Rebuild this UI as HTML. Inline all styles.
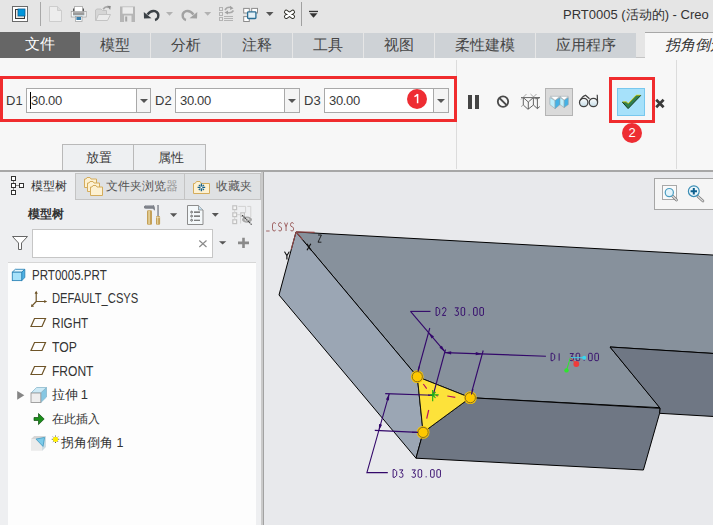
<!DOCTYPE html>
<html><head><meta charset="utf-8">
<style>
*{margin:0;padding:0;box-sizing:border-box}
html,body{width:713px;height:525px;overflow:hidden;background:#f7f7f7;font-family:"Liberation Sans",sans-serif;color:#333}
.a{position:absolute}
#qa{left:0;top:0;width:713px;height:32px;background:#e5e5e5}
#tabs{left:0;top:32px;width:713px;height:26px;background:#e5e5e5}
.tab{position:absolute;top:33px;height:25px;background:#ced2d6;font-size:15px;line-height:23px;font-weight:300;text-align:center;color:#464646;border-right:1px solid #e6e6e6}
#ribbon{left:0;top:58px;width:713px;height:112px;background:#f7f7f7}
.sep{position:absolute;width:1px;background:#dcdcdc}
.lbl{position:absolute;font-size:13px;color:#3a3a3a;line-height:16px}
.inp{position:absolute;top:88px;height:25px;background:#fff;border:1px solid #a9a9a9}
.dd{position:absolute;top:88px;height:25px;background:#f4f4f4;border:1px solid #a9a9a9}
.dd:after{content:"";position:absolute;left:3px;top:10px;border-left:4px solid transparent;border-right:4px solid transparent;border-top:4px solid #555}
.redc{position:absolute;width:20px;height:20px;border-radius:10px;background:#ee2d33;color:#fff;font-size:13px;line-height:20px;text-align:center}
.tree{position:absolute;font-size:13px;color:#333;line-height:16px;white-space:nowrap}
.lat{font-size:14px;transform-origin:0 0}
</style></head><body>
<!-- quick access -->
<div class="a" id="qa"></div>
<div class="a" id="tabs"></div>
<div class="a" id="ribbon"></div>
<svg class="a" style="left:0;top:0" width="330" height="32" viewBox="0 0 330 32">
 <!-- app icon -->
 <rect x="12.5" y="6.5" width="15" height="15" fill="#fff" stroke="#6a6a6a"/>
 <rect x="15.5" y="9.5" width="9" height="9" fill="#ece8e2" stroke="#3a3a3a"/>
 <rect x="18" y="9" width="7" height="7" fill="#0096dc" stroke="#0b5d92" stroke-width="0.8"/>
 <line x1="40.5" y1="2" x2="40.5" y2="26" stroke="#a8a8a8"/>
 <!-- new -->
 <path d="M49.5 6.5 H57.5 L61.5 10.5 V21.5 H49.5 Z" fill="#ededed" stroke="#cdcdcd"/>
 <path d="M57.5 6.5 V10.5 H61.5" fill="#dcdcdc" stroke="#cdcdcd"/>
 <!-- printer -->
 <rect x="74.5" y="6.5" width="8" height="6" fill="#fff" stroke="#b4b4b4"/>
 <rect x="73" y="8.5" width="1.2" height="4" fill="#555"/><rect x="82.8" y="8.5" width="1.2" height="4" fill="#555"/>
 <rect x="71.2" y="11.5" width="15" height="5.5" fill="#fbfbfb" stroke="#9c9c9c" stroke-width="0.7"/>
 <rect x="73" y="12.2" width="11.4" height="3.2" fill="#9a9a9a"/>
 <rect x="73" y="15.4" width="11.4" height="0.8" fill="#cde4ee"/>
 <rect x="75.5" y="16.5" width="6.5" height="5" fill="#fff" stroke="#a8a8a8" stroke-width="0.8"/>
 <rect x="76.4" y="17" width="4.6" height="3" fill="#3a80ac"/>
 <!-- open -->
 <path d="M95.5 20.5 V10 L97 9 H101 L102.5 10.5 H106.5 V20.5 Z" fill="#d6d6d6" stroke="#c2c2c2"/>
 <path d="M96 20.5 L98.5 14.5 H110.5 L107.5 20.5 Z" fill="#ebebeb" stroke="#c4c4c4"/>
 <path d="M103.2 9.2 Q105.5 5.8 108.6 7.6" fill="none" stroke="#a8a8a8" stroke-width="1.7"/>
 <path d="M107 5.8 L110.8 6 L110.2 10 Z" fill="#8a8a8a"/>
 <!-- save -->
 <rect x="120" y="6.5" width="15" height="15.5" fill="#b6b6b6"/>
 <rect x="122.5" y="7.2" width="10.5" height="6.5" fill="#ececec"/>
 <rect x="124" y="15.5" width="7.5" height="6.5" fill="#e4e4e4"/>
 <rect x="125.2" y="16.5" width="2" height="5" fill="#a6a6a6"/>
 <!-- undo -->
 <path d="M147.5 14.5 Q151 10 155 11.2 Q159.5 13 158 17.5 Q157 19.5 155 20" fill="none" stroke="#3b4146" stroke-width="2.4"/>
 <path d="M143.8 12 L151.5 18.3 L144 18.5 Z" fill="#3b4146"/>
 <path d="M166 12 H173 L169.5 15.8 Z" fill="#b2b2b2"/>
 <!-- redo -->
 <path d="M193.5 14.5 Q190 10 186 11.2 Q181.5 13 183 17.5 Q184 19.5 186 20" fill="none" stroke="#a2a2a2" stroke-width="2.4"/>
 <path d="M197.3 12 L189.5 18.3 L197 18.5 Z" fill="#a2a2a2"/>
 <path d="M204.2 12 H211.2 L207.7 15.8 Z" fill="#b2b2b2"/>
 <!-- regen -->
 <g fill="none" stroke="#b4b4b4" stroke-width="1">
  <rect x="219.5" y="7.5" width="3" height="3"/><rect x="219.5" y="12.5" width="3" height="3"/><rect x="219.5" y="17.5" width="3" height="3"/>
  <path d="M224 16.5 H233 M224 18.5 H233 M224 20.5 H233"/>
 </g>
 <path d="M225 10 Q227 6.5 231 7.5" fill="none" stroke="#a8a8a8" stroke-width="1.6"/>
 <path d="M233.5 10.5 Q231.5 13.5 227.5 12.5" fill="none" stroke="#a8a8a8" stroke-width="1.6"/>
 <path d="M230 5.8 L233.5 8.2 L230.2 10 Z M228 10.5 L224.5 12.5 L228 14.5 Z" fill="#a0a0a0"/>
 <!-- window -->
 <g fill="#fff" stroke="#8c8c8c" stroke-width="1">
  <rect x="243.7" y="8.4" width="5.6" height="4.6"/><rect x="251.7" y="8.4" width="5.8" height="4.6"/><rect x="243.7" y="16.6" width="5.6" height="4.9"/>
 </g>
 <rect x="247.6" y="11.8" width="8.3" height="6.7" rx="0.8" fill="#e4f0f6" stroke="#2a6e94" stroke-width="1.3"/>
 <path d="M266 12 H273.5 L269.75 16 Z" fill="#555"/>
 <!-- close -->
 <path d="M286.3 12 L292.7 16.6 M292.7 12 L286.3 16.6" fill="none" stroke="#2e2e26" stroke-width="4.6" stroke-linecap="round"/>
 <path d="M286.3 12 L292.7 16.6 M292.7 12 L286.3 16.6" fill="none" stroke="#fff" stroke-width="2.7" stroke-linecap="round"/>
 <line x1="301.5" y1="2" x2="301.5" y2="26" stroke="#a0a0a0"/>
 <rect x="309" y="10.8" width="9" height="1.3" fill="#333"/>
 <path d="M309.5 13.2 H317.5 L313.5 17.8 Z" fill="#333"/>
</svg>

<!-- tabs -->
<div class="tab" style="left:0;top:32px;height:26px;width:80px;background:#666;color:#fff;border-right:none">文件</div>
<div class="tab" style="left:80px;width:71px">模型</div>
<div class="tab" style="left:151px;width:71px">分析</div>
<div class="tab" style="left:222px;width:71px">注释</div>
<div class="tab" style="left:293px;width:71px">工具</div>
<div class="tab" style="left:364px;width:71px">视图</div>
<div class="tab" style="left:435px;width:101px">柔性建模</div>
<div class="tab" style="left:536px;width:100px;border-right:none">应用程序</div>
<div class="a" style="left:636px;top:57px;width:9px;height:1px;background:#c4c4c4"></div>
<div class="a" style="left:645px;top:32px;width:68px;height:27px;background:#f7f7f7;border-top:1px solid #a8a8a8"></div>
<div class="a" style="left:665px;top:35px;font-size:15px;font-style:italic;color:#333;white-space:nowrap;line-height:20px">拐角倒角</div>
<div class="a" style="left:563px;top:6px;font-size:13px;color:#333;white-space:nowrap;line-height:18px">PRT0005 (活动的) - Creo</div>

<!-- ribbon separators -->
<div class="sep" style="left:456px;top:60px;height:109px"></div>
<div class="sep" style="left:676px;top:60px;height:109px"></div>

<!-- dims -->
<div class="lbl" style="left:6px;top:93px">D1</div>
<div class="inp" style="left:26px;width:111px"></div>
<div class="dd" style="left:136px;width:15px"></div>
<div class="lbl" style="left:31px;top:93px;letter-spacing:-0.35px">30.00</div>
<div class="a" style="left:30px;top:92px;width:1px;height:17px;background:#000"></div>

<div class="lbl" style="left:155px;top:93px">D2</div>
<div class="inp" style="left:175px;width:110px"></div>
<div class="dd" style="left:284px;width:16px"></div>
<div class="lbl" style="left:180px;top:93px;letter-spacing:-0.35px">30.00</div>

<div class="lbl" style="left:304px;top:93px">D3</div>
<div class="inp" style="left:324px;width:110px"></div>
<div class="dd" style="left:433px;width:16px"></div>
<div class="lbl" style="left:329px;top:93px;letter-spacing:-0.35px">30.00</div>
<div class="redc" style="left:407px;top:89px"></div>
<svg class="a" style="left:407px;top:89px" width="20" height="20"><path d="M10.6 5 V14.2 M10.6 5.2 Q9.5 7 7.4 7.6" fill="none" stroke="#fff" stroke-width="1.5"/></svg>

<!-- red box 1 -->
<div class="a" style="left:0;top:76px;width:457px;height:46px;border:3px solid #f02c2e"></div>

<!-- right tools -->
<div class="a" style="left:468px;top:95px;width:4px;height:14px;background:#454545"></div>
<div class="a" style="left:475px;top:95px;width:4px;height:14px;background:#454545"></div>

<div class="a" style="left:545px;top:88px;width:28px;height:28px;background:#dadada;border:1px solid #b4b4b4"></div>
<div class="a" style="left:617px;top:88px;width:28px;height:28px;background:#a6e1fa;border:1px solid #78c8ee"></div>
<div class="a" style="left:609px;top:77px;width:46px;height:46px;border:3px solid #f02c2e"></div>
<div class="redc" style="left:622px;top:123px">2</div>

<svg class="a" style="left:460px;top:84px" width="220" height="36" viewBox="460 84 220 36">
 <circle cx="503" cy="101.6" r="5.2" fill="none" stroke="#4a4a4a" stroke-width="1.8"/>
 <line x1="499.4" y1="98" x2="506.6" y2="105.2" stroke="#4a4a4a" stroke-width="1.8"/>
 <g fill="none" stroke="#555" stroke-width="0.9">
  <path d="M521 97.6 H539.8 M523.3 97.6 V105 M528.3 102 V109 M533.4 97.6 V105 M537.4 98.6 V108.6"/>
  <path d="M523.3 97.6 L528.3 102 L533.4 97.6 M523.3 105 L528 109.3 L533.4 105 L537.4 108.6 L539.8 106.5 M533.4 97.6 L537.4 98.6 L539.8 97.6"/>
  <path d="M521 99.5 L526.5 94 M530.5 94 L536.5 99.8 M536.5 94 L531 99.5 M521 106.7 L523.3 105" stroke="#888" stroke-width="0.7"/>
 </g>
 <!-- shaded -->
 <g stroke="#8a9aa2" stroke-width="0.5">
 <path d="M550.5 96.3 H559.6 L555.1 100.6 Z" fill="#fff"/>
 <path d="M549.9 97.6 L555.1 100.6 V108.7 L549.9 104.6 Z" fill="#bdeefc"/>
 <path d="M555.1 100.6 L560 97.6 V104.6 L555.1 108.7 Z" fill="#44b2e6"/>
 <path d="M560 96.3 H568.2 L564.2 100.3 Z" fill="#fff"/>
 <path d="M560 97.6 L564.2 100.3 V107.6 L560 104.6 Z" fill="#bdeefc"/>
 <path d="M564.2 100.3 L568.3 97.6 V104.6 L564.2 107.6 Z" fill="#44b2e6"/>
 </g>
 <!-- glasses -->
 <defs><linearGradient id="lg" x1="0" y1="0" x2="0" y2="1"><stop offset="0" stop-color="#ffffff"/><stop offset="1" stop-color="#c4dbe6"/></linearGradient></defs>
 <circle cx="583.7" cy="102.5" r="4.2" fill="url(#lg)" stroke="#404040" stroke-width="1.25"/>
 <circle cx="593.4" cy="102.5" r="4.2" fill="url(#lg)" stroke="#404040" stroke-width="1.25"/>
 <path d="M580.2 100.5 Q582 96.5 585.5 95.2 L589.5 98.8" fill="none" stroke="#404040" stroke-width="1.2"/>
 <path d="M597.2 94.8 L597.6 102" fill="none" stroke="#404040" stroke-width="1.2"/>
 <!-- check -->
 <path d="M622.4 102.2 H626.5 L628.1 104 L636.4 95.5 H640.7 L628.1 108.6 Z" fill="#2f8050" stroke="#123a1c" stroke-width="1"/>
 <path d="M622.8 101.9 H626.3 L628.1 103.7 L636.3 95.2 H640.3" fill="none" stroke="#dfe81a" stroke-width="0.9"/>
 <!-- x -->
 <path d="M656.2 99.8 L663.6 107.2 M663.6 99.8 L656.2 107.2" stroke="#3a3a3a" stroke-width="2.7"/>
</svg>
<!-- placement tabs -->
<div class="a" style="left:62px;top:144px;width:72px;height:27px;background:#eef0f2;border:1px solid #b9b9b9;border-bottom:none"></div>
<div class="a" style="left:134px;top:144px;width:72px;height:27px;background:#eef0f2;border:1px solid #b9b9b9;border-bottom:none;border-left:none"></div>
<div class="lbl" style="left:86px;top:150px;font-size:13px">放置</div>
<div class="lbl" style="left:158px;top:150px;font-size:13px">属性</div>

<!-- line below ribbon -->
<div class="a" style="left:0;top:170px;width:713px;height:2px;background:#a7a7a7"></div>

<!-- left panel -->
<div class="a" style="left:0;top:172px;width:261px;height:353px;background:#eeeff1"></div>
<div class="a" style="left:261px;top:172px;width:2px;height:353px;background:#cacaca"></div>
<div class="a" style="left:263px;top:172px;width:1px;height:353px;background:#a2a2a2"></div>
<!-- panel tabs -->
<div class="a" style="left:75px;top:173px;width:110px;height:27px;background:#dfe1e3;border:1px solid #c4c4c4"></div>
<div class="a" style="left:185px;top:173px;width:76px;height:27px;background:#dfe1e3;border:1px solid #c4c4c4;border-left:none"></div>
<div class="tree" style="left:31px;top:178px;font-size:12px">模型树</div>
<div class="tree" style="left:106px;top:178px;font-size:12px;width:71px;overflow:hidden;color:#555">文件夹浏览<span style="opacity:0.55">器</span></div>
<div class="tree" style="left:216px;top:178px;font-size:12px;color:#555">收藏夹</div>
<div class="tree" style="left:28px;top:206px;font-size:12px;font-weight:bold">模型树</div>

<!-- search -->
<div class="a" style="left:32px;top:229px;width:181px;height:29px;background:#fff;border:1px solid #c6c6c6"></div>

<!-- tree white area -->
<div class="a" style="left:8px;top:262px;width:248px;height:263px;background:#fdfdfd;border-top:1px solid #d6d6d6"></div>
<div class="tree lat" style="left:32px;top:267px;transform:scaleX(0.825)">PRT0005.PRT</div>
<div class="tree lat" style="left:52px;top:290px;transform:scaleX(0.80)">DEFAULT_CSYS</div>
<div class="tree lat" style="left:52px;top:315px;transform:scaleX(0.83)">RIGHT</div>
<div class="tree lat" style="left:52px;top:339px;transform:scaleX(0.87)">TOP</div>
<div class="tree lat" style="left:52px;top:363px;transform:scaleX(0.86)">FRONT</div>
<div class="tree" style="left:52px;top:387px;letter-spacing:-0.3px">拉伸 1</div>
<div class="tree" style="left:52px;top:411px;font-size:12px">在此插入</div>
<div class="tree" style="left:61px;top:435px;font-size:12.5px">拐角倒角 1</div>
<svg class="a" style="left:0;top:172px" width="262" height="290" viewBox="0 172 262 290">
 <!-- model tree tab icon -->
 <g fill="#fff" stroke="#333" stroke-width="1">
  <rect x="11.5" y="176.5" width="4" height="4"/><rect x="11.5" y="183.5" width="4" height="4"/><rect x="11.5" y="190.5" width="4" height="4"/><rect x="19.5" y="183.5" width="4" height="4"/>
 </g>
 <path d="M13.5 181 V183 M13.5 188 V190 M16 185.5 H19" stroke="#888" stroke-width="1"/>
 <!-- folders -->
 <g fill="#fdf1d2" stroke="#d4ac5c" stroke-width="1">
  <path d="M84.5 187.5 V179 H86 L87 177.5 H90 L91 179 H96.5 V187.5 Z"/>
  <path d="M87.5 191.5 V183 H89 L90 181.5 H93 L94 183 H99.5 V191.5 Z"/>
  <path d="M90.5 195.5 V187 H92 L93 185.5 H96 L97 187 H102.5 V195.5 Z"/>
 </g>
 <path d="M193.5 193.5 V183.5 H195 L196.5 181.5 H200 L201.5 183.5 H209.5 V193.5 Z" fill="#fdf1d2" stroke="#d4ac5c" stroke-width="1"/>
 <g stroke="#13608c" stroke-width="1.4">
  <path d="M201.4 183.6 V191.2 M197.6 187.4 H205.2"/>
  <path d="M198.8 184.8 L200.2 186.2 M204 184.8 L202.6 186.2 M198.8 190 L200.2 188.6 M204 190 L202.6 188.6" stroke-width="1.1"/>
 </g>
 <circle cx="201.4" cy="187.4" r="0.9" fill="#fff"/>
 <!-- hammer/screwdriver -->
 <path d="M144 206.2 Q145.5 204.8 149 205 H153.5 Q155.3 206.5 154.9 210.7 L152.8 208.8 H146 Q144.3 208.8 144 207.8 Z" fill="#7d8189"/>
 <path d="M146 205.6 H153" stroke="#b4b8be" stroke-width="1"/>
 <rect x="147" y="210.2" width="5" height="14.6" rx="1.2" fill="#c4a058"/>
 <rect x="148.3" y="210.8" width="1.6" height="13.4" fill="#e6d29c"/>
 <rect x="157.2" y="205" width="1.6" height="11" fill="#858991"/>
 <rect x="157.5" y="205.5" width="0.6" height="10" fill="#b0b4ba"/>
 <rect x="156" y="216" width="4.1" height="8.8" rx="1.1" fill="#c4a058"/>
 <rect x="157" y="216.5" width="1.2" height="7.8" fill="#e2cc94"/>
 <path d="M156.2 217.6 H160" stroke="#f3ead0" stroke-width="0.6"/>
 <path d="M170 213.2 H177.2 L173.6 217 Z" fill="#555"/>
 <!-- doc -->
 <path d="M187.5 205.5 H198.5 L203 210 V224.5 H187.5 Z" fill="#f4f8fa" stroke="#8c8c8c" stroke-width="1"/>
 <path d="M198.5 205.5 V210 H203" fill="#c5dfee" stroke="#8c8c8c" stroke-width="0.8"/>
 <g fill="none" stroke="#555" stroke-width="0.9"><circle cx="191.6" cy="212.1" r="0.9"/><circle cx="191.6" cy="216.1" r="0.9"/><circle cx="191.6" cy="220.2" r="0.9"/></g>
 <path d="M194 212.1 H200 M194 216.1 H200 M194 220.2 H200" stroke="#555" stroke-width="1.1"/>
 <path d="M211.8 213.1 H218.8 L215.3 216.7 Z" fill="#555"/>
 <!-- show icon -->
 <g fill="#f4f4f4" stroke="#c2c2c2" stroke-width="1.2">
  <rect x="232.8" y="205.8" width="3.8" height="3.8"/><rect x="232.8" y="212.8" width="3.8" height="3.8"/><rect x="232.8" y="219.8" width="3.8" height="3.8"/>
  <rect x="240.8" y="212.8" width="3.6" height="3.6"/>
 </g>
 <path d="M234.7 209.6 V212.8 M234.7 216.6 V219.8 M236.6 214.7 H240.8 M238.3 206.4 H245.6 V212.8 M240.6 217 V223.5 M247.3 206.4 H250.8 V217" fill="none" stroke="#d2d2d2" stroke-width="1"/>
 <ellipse cx="247" cy="219.6" rx="5" ry="3.1" fill="#a8a8a8"/>
 <ellipse cx="247" cy="219.6" rx="2.6" ry="1.8" fill="#d8d8d8"/>
 <path d="M242.1 215.1 L251.8 224.8" stroke="#3a3a3a" stroke-width="1.1" stroke-dasharray="1.4 0.6"/>
 <!-- filter -->
 <path d="M12.5 236.5 H27.5 L21.5 243 V249.5 H18.5 V243 Z" fill="#fff" stroke="#666" stroke-width="1"/>
 <!-- search x, arrow, plus -->
 <path d="M199.3 240.5 L206.5 247 M206.5 240.5 L199.3 247" stroke="#8a8a8a" stroke-width="1.2"/>
 <path d="M219 241.2 H226.3 L222.65 244.6 Z" fill="#555"/>
 <path d="M238 242.9 H249 M243.5 237.8 V248" stroke="#8a8a8a" stroke-width="2.6"/>
 <!-- prt cube -->
 <path d="M12.3 272.2 L15.3 269.3 H24.8 L21.7 272.2 Z" fill="#e4f6fd" stroke="#2f86b8" stroke-width="0.9"/>
 <path d="M21.7 272.2 L24.8 269.3 V277.6 L21.7 280.6 Z" fill="#4fb3e4" stroke="#2f86b8" stroke-width="0.9"/>
 <rect x="12.3" y="272.2" width="9.4" height="8.4" fill="#a6e2fa" stroke="#2f86b8" stroke-width="0.9"/>
 <!-- csys -->
 <g stroke="#6e5428" stroke-width="1.2" fill="none">
  <path d="M36.2 292 V301.5 H46 M36.2 301.5 L31.8 306.2"/>
 </g>
 <path d="M34.6 293.8 L36.2 290.8 L37.8 293.8 Z M44.2 299.9 L47.2 301.5 L44.2 303.1 Z M31 307 L31.6 303.9 L34.1 306.4 Z" fill="#6e5428"/>
 <!-- planes -->
 <g fill="none" stroke="#6e5428" stroke-width="1.2">
  <path d="M34.5 318.5 H45.5 L42 326.5 H31 Z"/>
  <path d="M34.5 342.5 H45.5 L42 350.5 H31 Z"/>
  <path d="M34.5 366.5 H45.5 L42 374.5 H31 Z"/>
 </g>
 <!-- expand triangle -->
 <path d="M17.2 390.9 L24.3 395.35 L17.2 399.8 Z" fill="#858585"/>
 <!-- extrude -->
 <path d="M31 393 L36.6 387.5 H46.5 L40.8 393 Z" fill="#cdeaf6" stroke="#8ab8cc" stroke-width="0.8"/>
 <path d="M40.8 393 L46.5 387.5 V397 L40.8 402.5 Z" fill="#86c7e3" stroke="#8ab8cc" stroke-width="0.8"/>
 <rect x="31" y="393" width="9.8" height="9.5" fill="#eeeeee" stroke="#9a9a9a" stroke-width="0.9"/>
 <!-- insert arrow -->
 <path d="M34 417.5 H38.5 V413.5 L44.2 419 L38.5 424.6 V420.5 H34 Z" fill="#1b8f1b" stroke="#0d4a0d" stroke-width="0.7"/>
 <!-- chamfer icon -->
 <path d="M34.2 436 H45.7 V447 L42.1 450.8 V439.1 H31 Z" fill="#d6d6d6"/>
 <path d="M42.1 439.1 L45.7 436 V447 L42.1 450.8 Z" fill="#c9dbe3"/>
 <rect x="31" y="439.1" width="11.1" height="11.7" fill="#ebebeb"/>
 <path d="M36 439.1 L44.6 437.4 L43 446.4 Z" fill="#7ccbea" stroke="#3d98c0" stroke-width="0.8"/>
 <!-- asterisk -->
 <circle cx="55.5" cy="439.3" r="2.6" fill="#ffee00"/>
 <g stroke="#333" stroke-width="0.9"><path d="M55.5 435.6 V436.5 M55.5 442.1 V443 M51.8 439.3 H52.7 M58.3 439.3 H59.2 M52.9 436.7 L53.5 437.3 M58.1 436.7 L57.5 437.3 M52.9 441.9 L53.5 441.3 M58.1 441.9 L57.5 441.3"/></g>
</svg>
<!-- viewport -->
<div class="a" style="left:264px;top:172px;width:449px;height:353px;background:#e8e9ec"></div>
<svg class="a" style="left:264px;top:172px" width="449" height="353" viewBox="264 172 449 353">
<polygon points="296,232 714,255.1 714,353.5 610,347 660,407.7 470.3,397.7 417.3,376.7" fill="#87919c" stroke="#000" stroke-width="1"/>
<polygon points="296,232 279,295 416,458.2 423.1,432.4 417.3,376.7" fill="#9ba6b4" stroke="#000" stroke-width="1"/>
<polygon points="423.1,432.4 470.3,397.7 660.2,408.3 659.6,413.3 643.4,470 416,458.2" fill="#6f7784" stroke="#000" stroke-width="1"/>
<polygon points="610,347 714,353.5 714,416.5 659.6,413.3 660.2,408.3" fill="#6f7784" stroke="#000" stroke-width="1"/>
<polygon points="417.3,376.7 470.3,397.7 423.1,432.4" fill="#fde23a" stroke="#111" stroke-width="1"/>
<path d="M423.3 384 L426.7 388.7 M447.3 396 L455.3 397.3 M428.7 410 L426.7 418.7 M436 395.5 L438 396" stroke="#b8145e" stroke-width="1.2" fill="none"/>
<g fill="none" stroke="#33086a" stroke-width="1.1">
<path d="M410.5 311.4 H430.5"/>
<path d="M410.5 311.4 L444.8 351.6"/>
<path d="M418 371 L429.8 328"/>
<path d="M445.5 349.5 L433.6 393.5"/>
<path d="M444.8 352.6 L545.9 356.2"/>
<path d="M471.6 392.5 L483.2 350.5"/>
<path d="M385.2 393.6 L432.7 395.3"/>
<path d="M374.8 430.4 L418 432.4"/>
<path d="M389.2 393.8 L366.9 472.6 H387.8"/>
</g>
<path d="M428.55 332.55 L433.99 336.46 L431.55 338.54 Z" fill="#33086a"/>
<path d="M444.90 351.72 L439.46 347.81 L441.90 345.73 Z" fill="#33086a"/>
<path d="M444.66 352.60 L451.22 351.23 L451.10 354.43 Z" fill="#33086a"/>
<path d="M482.25 353.93 L475.70 355.30 L475.81 352.10 Z" fill="#33086a"/>
<path d="M389.22 393.74 L388.99 400.43 L385.91 399.56 Z" fill="#33086a"/>
<path d="M378.79 430.58 L379.02 423.89 L382.10 424.77 Z" fill="#33086a"/>
<circle cx="417.3" cy="376.7" r="6.4" fill="#fbc600"/><circle cx="417.3" cy="376.7" r="5.1" fill="#ffc800" stroke="#756228" stroke-width="0.9"/>
<circle cx="470.3" cy="397.7" r="6.4" fill="#fbc600"/><circle cx="470.3" cy="397.7" r="5.1" fill="#ffc800" stroke="#756228" stroke-width="0.9"/>
<circle cx="423.1" cy="432.4" r="6.4" fill="#fbc600"/><circle cx="423.1" cy="432.4" r="5.1" fill="#ffc800" stroke="#756228" stroke-width="0.9"/>
<path d="M418 371.5 L419.5 366 M471.4 394.5 L473 389 M418 432.4 L412 432.2 M432.7 395.3 L428 395.1" stroke="#33086a" stroke-width="1.1" fill="none"/>
<path d="M432.7 390 V401.3 M430 394.9 H438.7 M432.7 394.9 L435.5 392 M432.7 394.9 L435.5 398" stroke="#18b018" stroke-width="1.1" fill="none"/>
<g fill="none" stroke="#33086a" stroke-width="1.0" vector-effect="non-scaling-stroke"><path transform="translate(436.10 307.5) scale(0.9 0.99)" d="M0 0 V8 M0 0 H2 L4 2 V6 L2 8 H0"/><path transform="translate(442.35 307.5) scale(0.9 0.99)" d="M0 1.8 Q0.2 0 2 0 Q4 0 4 2 Q4 3.4 2.6 4.6 L0 8 H4"/><path transform="translate(454.85 307.5) scale(0.9 0.99)" d="M0 0.3 H4 L1.6 3.6 H2.4 Q4 3.6 4 5.4 V6.5 Q4 8 2.6 8 H1.2 Q0.2 8 0 7"/><path transform="translate(461.10 307.5) scale(0.9 0.99)" d="M1.2 0 H2.8 Q4 0 4 1.5 V6.5 Q4 8 2.8 8 H1.2 Q0 8 0 6.5 V1.5 Q0 0 1.2 0 Z"/><path transform="translate(467.35 307.5) scale(0.9 0.99)" d="M2 6.9 V8.1"/><path transform="translate(473.60 307.5) scale(0.9 0.99)" d="M1.2 0 H2.8 Q4 0 4 1.5 V6.5 Q4 8 2.8 8 H1.2 Q0 8 0 6.5 V1.5 Q0 0 1.2 0 Z"/><path transform="translate(479.85 307.5) scale(0.9 0.99)" d="M1.2 0 H2.8 Q4 0 4 1.5 V6.5 Q4 8 2.8 8 H1.2 Q0 8 0 6.5 V1.5 Q0 0 1.2 0 Z"/></g>
<g fill="none" stroke="#33086a" stroke-width="1.0" vector-effect="non-scaling-stroke"><path transform="translate(551.10 353.3) scale(0.9 0.92)" d="M0 0 V8 M0 0 H2 L4 2 V6 L2 8 H0"/><path transform="translate(557.35 353.3) scale(0.9 0.92)" d="M2 0 V8"/><path transform="translate(569.85 353.3) scale(0.9 0.92)" d="M0 0.3 H4 L1.6 3.6 H2.4 Q4 3.6 4 5.4 V6.5 Q4 8 2.6 8 H1.2 Q0.2 8 0 7"/><path transform="translate(576.10 353.3) scale(0.9 0.92)" d="M1.2 0 H2.8 Q4 0 4 1.5 V6.5 Q4 8 2.8 8 H1.2 Q0 8 0 6.5 V1.5 Q0 0 1.2 0 Z"/><path transform="translate(582.35 353.3) scale(0.9 0.92)" d="M2 6.9 V8.1"/><path transform="translate(588.60 353.3) scale(0.9 0.92)" d="M1.2 0 H2.8 Q4 0 4 1.5 V6.5 Q4 8 2.8 8 H1.2 Q0 8 0 6.5 V1.5 Q0 0 1.2 0 Z"/><path transform="translate(594.85 353.3) scale(0.9 0.92)" d="M1.2 0 H2.8 Q4 0 4 1.5 V6.5 Q4 8 2.8 8 H1.2 Q0 8 0 6.5 V1.5 Q0 0 1.2 0 Z"/></g>
<g fill="none" stroke="#33086a" stroke-width="1.0" vector-effect="non-scaling-stroke"><path transform="translate(393.10 469.6) scale(0.9 0.96)" d="M0 0 V8 M0 0 H2 L4 2 V6 L2 8 H0"/><path transform="translate(399.35 469.6) scale(0.9 0.96)" d="M0 0.3 H4 L1.6 3.6 H2.4 Q4 3.6 4 5.4 V6.5 Q4 8 2.6 8 H1.2 Q0.2 8 0 7"/><path transform="translate(411.85 469.6) scale(0.9 0.96)" d="M0 0.3 H4 L1.6 3.6 H2.4 Q4 3.6 4 5.4 V6.5 Q4 8 2.6 8 H1.2 Q0.2 8 0 7"/><path transform="translate(418.10 469.6) scale(0.9 0.96)" d="M1.2 0 H2.8 Q4 0 4 1.5 V6.5 Q4 8 2.8 8 H1.2 Q0 8 0 6.5 V1.5 Q0 0 1.2 0 Z"/><path transform="translate(424.35 469.6) scale(0.9 0.96)" d="M2 6.9 V8.1"/><path transform="translate(430.60 469.6) scale(0.9 0.96)" d="M1.2 0 H2.8 Q4 0 4 1.5 V6.5 Q4 8 2.8 8 H1.2 Q0 8 0 6.5 V1.5 Q0 0 1.2 0 Z"/><path transform="translate(436.85 469.6) scale(0.9 0.96)" d="M1.2 0 H2.8 Q4 0 4 1.5 V6.5 Q4 8 2.8 8 H1.2 Q0 8 0 6.5 V1.5 Q0 0 1.2 0 Z"/></g>
<path d="M570.4 357.7 L566.5 370.4" stroke="#2ee52e" stroke-width="1"/>
<path d="M570.4 357.7 H584.2" stroke="#3ad6f0" stroke-width="1"/>
<path d="M570.4 357.7 L575 362.5" stroke="#e03030" stroke-width="1"/>
<circle cx="566.5" cy="370.4" r="2.2" fill="#2ee52e"/>
<circle cx="584.2" cy="357.7" r="2" fill="#3ad6f0"/>
<circle cx="576.3" cy="364" r="2.9" fill="#f03a3a"/>
<g fill="none" stroke="#904848" stroke-width="0.9" vector-effect="non-scaling-stroke"><path transform="translate(266.50 222.6) scale(0.78 1.05)" d="M-0.5 8 H4"/><path transform="translate(272.50 222.6) scale(0.78 1.05)" d="M4 1.2 Q3.6 0 2.2 0 Q0 0 0 2.2 V5.8 Q0 8 2.2 8 Q3.6 8 4 6.8"/><path transform="translate(278.50 222.6) scale(0.78 1.05)" d="M4 1 Q3.5 0 2 0 Q0 0 0 2 Q0 3.8 2 4 Q4 4.2 4 6 Q4 8 2 8 Q0.5 8 0 7"/><path transform="translate(284.50 222.6) scale(0.78 1.05)" d="M0 0 L2 4 L4 0 M2 4 V8"/><path transform="translate(290.50 222.6) scale(0.78 1.05)" d="M4 1 Q3.5 0 2 0 Q0 0 0 2 Q0 3.8 2 4 Q4 4.2 4 6 Q4 8 2 8 Q0.5 8 0 7"/></g>
<path d="M296.1 231.9 L314.6 232.4 M296.1 231.9 L291.2 249.3 M296.1 231.9 L302.6 239.6" stroke="#904848" stroke-width="1.1" fill="none"/>
<g fill="none" stroke="#111" stroke-width="1.0" vector-effect="non-scaling-stroke"><path transform="translate(318.00 235) scale(0.85 0.9)" d="M0 0 H4 L0 8 H4"/></g>
<g fill="none" stroke="#111" stroke-width="1.2" vector-effect="non-scaling-stroke"><path transform="translate(307.00 243.8) scale(0.95 0.8)" d="M0 0 L4 8 M4 0 L0 8"/></g>
<g fill="none" stroke="#111" stroke-width="1.0" vector-effect="non-scaling-stroke"><path transform="translate(284.50 251.6) scale(1.2 1.0)" d="M0 0 L2 4 L4 0 M2 4 V8"/></g>
</svg>

<!-- viewport toolbar -->
<div class="a" style="left:654px;top:178px;width:60px;height:32px;background:#f5f5f5;border:1px solid #a6a6a6"></div>
<svg class="a" style="left:654px;top:178px" width="59" height="32" viewBox="654 178 59 32">
 <rect x="662.5" y="185.5" width="14" height="14" fill="#fafafa" stroke="#a8a8a8" stroke-width="1"/>
 <path d="M672 195.5 L676.5 200" stroke="#777" stroke-width="2.6" stroke-linecap="round"/>
 <path d="M672 195.5 L676.5 200" stroke="#ddd" stroke-width="1.2" stroke-linecap="round"/>
 <circle cx="669.3" cy="192.6" r="4.1" fill="#e3f4fb" stroke="#4a9cc0" stroke-width="1.2"/>
 <path d="M698 196.5 L703 201" stroke="#777" stroke-width="2.6" stroke-linecap="round"/>
 <path d="M698 196.5 L703 201" stroke="#ddd" stroke-width="1.2" stroke-linecap="round"/>
 <circle cx="693.8" cy="191.2" r="5.4" fill="#eaf6fb" stroke="#3a8db5" stroke-width="1.2"/>
 <path d="M693.8 188 V194.4 M690.6 191.2 H697" stroke="#0d5f8e" stroke-width="2"/>
</svg>
</body></html>
